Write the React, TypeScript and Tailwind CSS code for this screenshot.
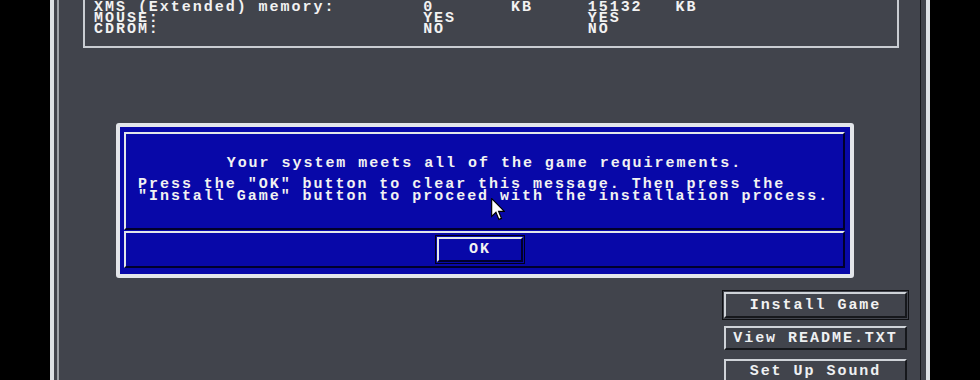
import * as React from "react";

const col = (parts: [string, number][]) =>
  parts.map(([t, w]) => (w ? t.padEnd(w, " ") : t)).join("");

const rows = [
  col([["XMS (Extended) memory:", 30], ["0", 8], ["KB", 7], ["15132", 8], ["KB", 0]]),
  col([["MOUSE:", 30], ["YES", 15], ["YES", 0]]),
  col([["CDROM:", 30], ["NO", 15], ["NO", 0]]),
];

const GrayButton = ({ label }: { label: string }) => (
  <div className="w-[183px] h-[24px] flex items-center justify-center border-t-2 border-l-2 border-[#cfd3d8] border-b-2 border-r-2 border-b-[#16181c] border-r-[#16181c] bg-[#41444c] text-[#eef0f2]">
    {label}
  </div>
);

const Cursor = () => (
  <svg
    className="absolute left-[491px] top-[198px]"
    width="14"
    height="23"
    viewBox="0 0 12 20"
  >
    <path
      d="M0.5 0.5 L0.5 16 L4.2 12.4 L6.8 18.6 L9 17.7 L6.5 11.6 L11.5 11.6 Z"
      fill="#ffffff"
      stroke="#000000"
      strokeWidth="1"
    />
  </svg>
);

export default function App() {
  return (
    <div className="relative w-[980px] h-[380px] overflow-hidden bg-black font-['Liberation_Mono',monospace] font-bold text-[15px] leading-[11px] tracking-[1.97px] text-[#f2f2f2]">
      <div className="ml-[50px] w-[880px] h-full border-x-4 border-[#dde1e5] bg-[#41444c]">
        <div className="ml-[3px] mr-[5px] h-full flex flex-col border-l-2 border-l-[#9ea2a8] border-r border-r-[#15171b]">
          {/* system info box, scrolled past the top */}
          <div className="ml-[24px] w-[816px] mt-[-11px] border-2 border-[#c9cdd2] pl-[9px] pt-[11px] pb-[11px]">
            {rows.map((r, i) => (
              <div key={i} className="whitespace-pre h-[11px]">
                {r}
              </div>
            ))}
          </div>

          {/* message dialog */}
          <div className="ml-[57px] mt-[75px] w-[738px] h-[155px] rounded-[3px] border-4 border-[#e3e6ea] bg-[#0808a8] pt-[5px] pl-[4px] pr-[5px] pb-[6px] flex flex-col gap-[1px]">
            <div className="h-[98px] border-t-2 border-l-2 border-[#e3e6ea] border-b-2 border-r-2 border-b-[#00002c] border-r-[#00002c] pt-[24px]">
              <div className="text-center whitespace-pre">
                Your system meets all of the game requirements.
              </div>
              <div className="mt-[10px] pl-[12px] leading-[12px] whitespace-pre">
                <div>Press the "OK" button to clear this message. Then press the</div>
                <div>"Install Game" button to proceed with the installation process.</div>
              </div>
            </div>
            <div className="h-[37px] border-t-2 border-l-2 border-[#e3e6ea] border-b-2 border-r-2 border-b-[#00002c] border-r-[#00002c] flex items-center">
              <div className="ml-[309px] w-[90px] h-[29px] border border-[#00001a] p-[1px]">
                <div className="h-full flex items-center justify-center border-t-2 border-l-2 border-[#e3e6ea] border-b-2 border-r-2 border-b-[#00002c] border-r-[#00002c]">
                  OK
                </div>
              </div>
            </div>
          </div>

          {/* side buttons */}
          <div className="ml-[663px] mt-[12px] flex flex-col items-start">
            <div className="w-[187px] h-[30px] border border-[#101114] p-[1px]">
              <div className="w-[183px] h-[26px] flex items-center justify-center border-t-2 border-l-2 border-[#cfd3d8] border-b-2 border-r-2 border-b-[#16181c] border-r-[#16181c]">
                Install Game
              </div>
            </div>
            <div className="ml-[2px] mt-[6px]">
              <GrayButton label="View README.TXT" />
            </div>
            <div className="ml-[2px] mt-[9px]">
              <GrayButton label="Set Up Sound" />
            </div>
          </div>
        </div>
      </div>
      <Cursor />
    </div>
  );
}
